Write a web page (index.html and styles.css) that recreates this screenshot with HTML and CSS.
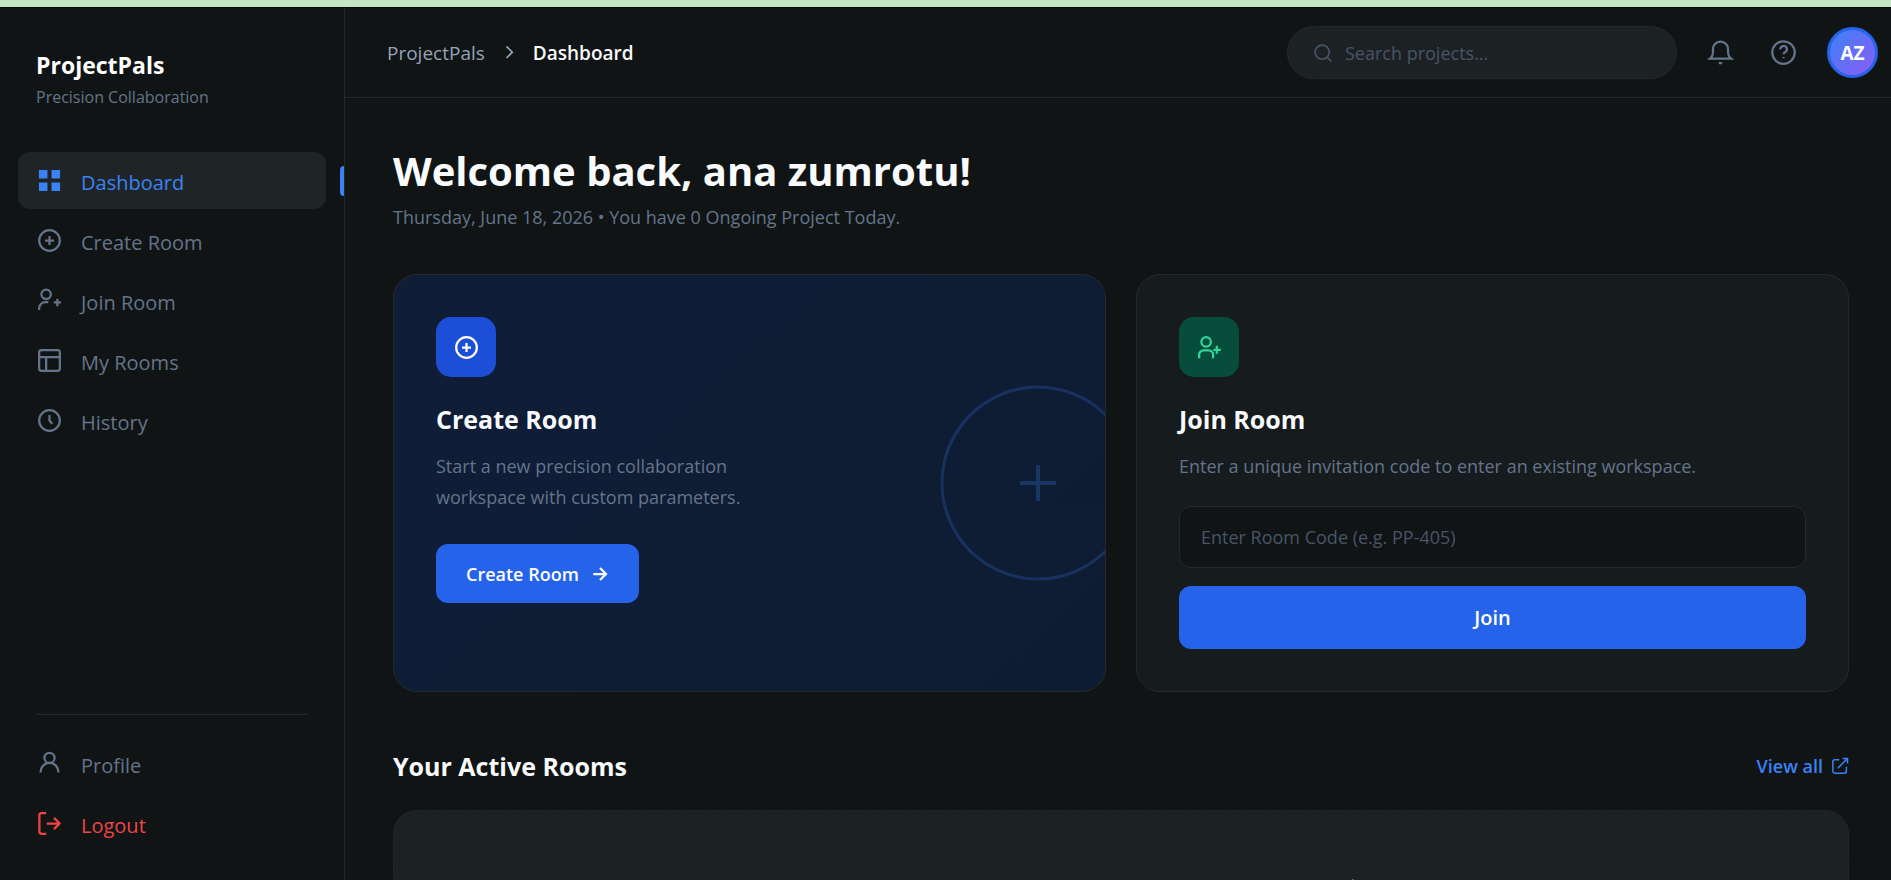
FILE: index.html
```html
<!DOCTYPE html>
<html lang="en">
<head>
  <meta charset="UTF-8">
  <meta name="viewport" content="width=device-width, initial-scale=1.0">
  <title>ProjectPals - Dashboard</title>
  <link rel="stylesheet" href="styles.css">
</head>
<body>

  <!-- Sidebar -->
  <aside class="sidebar">
    <div class="brand">
      <div class="brand-name">ProjectPals</div>
      <div class="brand-sub">Precision Collaboration</div>
    </div>

    <nav class="nav">
      <a href="#" class="nav-item active">
        <svg class="icon" viewBox="0 0 24 24"><rect x="2.6" y="2.6" width="7.6" height="7.6" rx="0.6"/><rect x="13.8" y="2.6" width="7.6" height="7.6" rx="0.6"/><rect x="2.6" y="13.8" width="7.6" height="7.6" rx="0.6"/><rect x="13.8" y="13.8" width="7.6" height="7.6" rx="0.6"/></svg>
        <span>Dashboard</span>
      </a>
      <a href="#" class="nav-item">
        <svg class="icon" viewBox="0 0 24 24"><circle cx="12" cy="12" r="9.2"/><path d="M12 8v8M8 12h8"/></svg>
        <span>Create Room</span>
      </a>
      <a href="#" class="nav-item">
        <svg class="icon" viewBox="0 0 24 24"><circle cx="9" cy="6.500" r="4.200"/><path d="M2.800 20.500v-1.500a5.500 5.500 0 0 1 5.500-5.500H11M19 10.500v6.500M15.800 13.700h6.500"/></svg>
        <span>Join Room</span>
      </a>
      <a href="#" class="nav-item">
        <svg class="icon" viewBox="0 0 24 24"><rect x="2.8" y="2.8" width="18.4" height="18.4" rx="2"/><path d="M3 9h18M9 9v12"/></svg>
        <span>My Rooms</span>
      </a>
      <a href="#" class="nav-item">
        <svg class="icon" viewBox="0 0 24 24"><circle cx="12" cy="12" r="9.2"/><path d="M12 7v5l2.500 3"/></svg>
        <span>History</span>
      </a>
    </nav>

    <div class="nav nav-bottom">
      <a href="#" class="nav-item">
        <svg class="icon" viewBox="0 0 24 24"><circle cx="12" cy="7" r="4.500"/><path d="M4 20c0-5 3.500-8.500 8-8.500s8 3.500 8 8.500"/></svg>
        <span>Profile</span>
      </a>
      <a href="#" class="nav-item logout">
        <svg class="icon" viewBox="0 0 24 24"><path d="M9 2.800H5a2 2 0 0 0-2 2v14.400a2 2 0 0 0 2 2h4M9.500 12H21M16 7l5 5-5 5"/></svg>
        <span>Logout</span>
      </a>
    </div>
  </aside>

  <div class="main">
    <!-- Topbar -->
    <header class="topbar">
      <div class="breadcrumb">
        <a href="#">ProjectPals</a>
        <svg class="icon chevron" viewBox="0 0 24 24"><path d="M9 4l7 7-7 7"/></svg>
        <span class="current">Dashboard</span>
      </div>
      <div class="topbar-right">
        <label class="search">
          <svg class="icon" viewBox="0 0 24 24"><circle cx="11" cy="11" r="8.500"/><path d="M17.500 17.500L22 22"/></svg>
          <input type="text" placeholder="Search projects..." aria-label="Search projects">
        </label>
        <button class="icon-btn" aria-label="Notifications">
          <svg class="icon" viewBox="0 0 24 24"><path d="M2.500 17.500h19c-2-1.500-2.800-3.500-2.800-6.500V9a6.700 6.700 0 0 0-13.400 0v2c0 3-.8 5-2.800 6.500zM10.500 21.500h3"/></svg>
        </button>
        <button class="icon-btn" aria-label="Help">
          <svg class="icon" viewBox="0 0 24 24"><circle cx="12" cy="12" r="10"/><path d="M9.200 9.200a2.900 2.900 0 1 1 4.200 2.500c-.9.500-1.400.9-1.400 1.800M12 16v1"/></svg>
        </button>
        <button class="avatar">AZ</button>
      </div>
    </header>

    <main class="content">
      <h1>Welcome back, ana zumrotu!</h1>
      <p class="subtitle">Thursday, June 18, 2026 • You have 0 Ongoing Project Today.</p>

      <div class="cards">
        <section class="card card-create">
          <svg class="card-art" viewBox="0 0 196 196"><circle cx="98" cy="98" r="96"/><path class="plus" d="M80 98h36M98 80v36"/></svg>
          <div class="card-icon blue">
            <svg class="icon" viewBox="0 0 24 24"><circle cx="12" cy="12" r="9.200"/><path d="M12 8v8M8 12h8"/></svg>
          </div>
          <h2>Create Room</h2>
          <p>Start a new precision collaboration workspace with custom parameters.</p>
          <button class="btn">Create Room
            <svg class="icon" viewBox="0 0 24 24"><path d="M3 12h17M12 4l8 8-8 8"/></svg>
          </button>
        </section>

        <section class="card">
          <div class="card-icon green">
            <svg class="icon" viewBox="0 0 24 24"><circle cx="9" cy="7" r="4.200"/><path d="M2.800 21.500v-3a4 4 0 0 1 4-4h4.400a4 4 0 0 1 4 4v3M18.500 10.500v7M15.500 14h6.500"/></svg>
          </div>
          <h2>Join Room</h2>
          <p>Enter a unique invitation code to enter an existing workspace.</p>
          <form class="join-form">
            <input type="text" placeholder="Enter Room Code (e.g. PP-405)" aria-label="Room code">
            <button type="button" class="btn">Join</button>
          </form>
        </section>
      </div>

      <div class="section-head">
        <h2>Your Active Rooms</h2>
        <a href="#" class="view-all">View all
          <svg class="icon" viewBox="0 0 24 24"><path d="M11 3.500H5a2.500 2.500 0 0 0-2.500 2.500v13A2.500 2.500 0 0 0 5 21.500h13a2.500 2.500 0 0 0 2.500-2.500v-6M9 15L22 2M15.500 2H22v6.500"/></svg>
        </a>
      </div>

      <div class="empty">
        <p>No active rooms yet. Create or join a room to get started.</p>
      </div>
    </main>
  </div>

</body>
</html>
```

FILE: styles.css
```css
* {
  box-sizing: border-box;
  margin: 0;
  padding: 0;
}

body {
  font-family: "Open Sans", "Noto Sans", sans-serif;
  background-color: #101414;
  color: #f8fafc;
  display: flex;
  height: 100vh;
  overflow: hidden;
  border-top: 7px solid #c5e3c6;
}

a {
  color: inherit;
  text-decoration: none;
}

button, input {
  font-family: inherit;
  border: none;
  outline: none;
}

button {
  cursor: pointer;
}

.icon {
  width: 27px;
  height: 27px;
  flex-shrink: 0;
  fill: none;
  stroke: currentColor;
  stroke-width: 2;
}

/* Sidebar */
.sidebar {
  width: 345px;
  flex-shrink: 0;
  display: flex;
  flex-direction: column;
  padding: 40px 18px 28px;
  border-right: 1px solid #25292b;
  border-top: 1px solid #050707;
}

.brand {
  padding: 0 18px;
  margin-bottom: 39px;
}

.brand-name {
  font-size: 23px;
  line-height: 34px;
  font-weight: 700;
  color: #fff;
}

.brand-sub {
  font-size: 16px;
  line-height: 31px;
  color: #64748b;
}

.nav {
  display: flex;
  flex-direction: column;
  gap: 3px;
}

.nav-item {
  position: relative;
  display: flex;
  align-items: center;
  gap: 18px;
  height: 57px;
  padding: 0 18px;
  border-radius: 12px;
  font-size: 20px;
  color: #64748b;
}

.nav-item span {
  padding-top: 3px;
}

.nav-item.active {
  background-color: #1f2526;
  color: #3b82f6;
  font-weight: 500;
}

.nav-item.active .icon {
  fill: currentColor;
  stroke: none;
}

/* marker on the sidebar edge */
.nav-item.active::after {
  content: "";
  position: absolute;
  right: -18px;
  width: 4px;
  height: 30px;
  border-radius: 4px 0 0 4px;
  background-color: #3b82f6;
}

.nav-bottom {
  margin-top: auto;
}

.nav-bottom::before {
  content: "";
  height: 1px;
  margin: 0 18px 17px;
  background-color: #25292b;
}

.nav-item.logout {
  color: #ef4444;
}

/* Topbar */
.main {
  flex: 1;
  min-width: 0;
  display: flex;
  flex-direction: column;
}

.topbar {
  height: 91px;
  flex-shrink: 0;
  display: flex;
  align-items: center;
  justify-content: space-between;
  padding: 0 13px 0 42px;
  border-top: 1px solid #050707;
  border-bottom: 1px solid #25292b;
}

.breadcrumb {
  display: flex;
  align-items: center;
  gap: 14px;
  font-size: 19px;
  color: #94a3b8;
}

.breadcrumb .chevron {
  width: 20px;
  height: 20px;
}

.breadcrumb .current {
  color: #f8fafc;
  font-weight: 600;
}

.topbar-right {
  display: flex;
  align-items: center;
}

.search {
  display: flex;
  align-items: center;
  gap: 12px;
  width: 390px;
  height: 53px;
  margin-right: 12px;
  padding: 0 25px;
  border: 1px solid #25292b;
  border-radius: 27px;
  background-color: #1c2123;
  color: #475569;
}

.search .icon {
  width: 20px;
  height: 20px;
}

.search input {
  flex: 1;
  min-width: 0;
  background: none;
  color: #f8fafc;
  font-size: 18px;
}

input::placeholder {
  color: #475569;
}

.icon-btn {
  display: flex;
  align-items: center;
  justify-content: center;
  width: 63px;
  height: 48px;
  background: none;
  color: #64748b;
}

.avatar {
  width: 51px;
  height: 51px;
  margin-left: 12px;
  border: 3px solid #2563eb;
  border-radius: 50%;
  background: linear-gradient(135deg, #3b82f6, #8b5cf6);
  color: #fff;
  font-size: 19px;
  font-weight: 700;
}

/* Content */
.content {
  padding: 46px 42px 48px 48px;
}

h1 {
  font-size: 40px;
  line-height: 54px;
  font-weight: 700;
}

.subtitle {
  font-size: 18px;
  line-height: 30px;
  margin: 4px 0 42px;
  color: #64748b;
}

.cards {
  display: grid;
  grid-template-columns: 1fr 1fr;
  gap: 30px;
}

.card {
  position: relative;
  overflow: hidden;
  padding: 42px;
  border: 1px solid #25292b;
  border-radius: 24px;
  background-color: #161b1d;
}

.card-create {
  background: linear-gradient(135deg, #101d37, #0e1c33);
}

.card-art {
  position: absolute;
  right: -31px;
  top: 110px;
  width: 196px;
  height: 196px;
  fill: none;
  stroke: #3b6fe0;
  stroke-width: 3;
  opacity: 0.25;
}

.card-art .plus {
  stroke: #3b82f6;
  stroke-width: 4;
}

.card-icon {
  display: flex;
  align-items: center;
  justify-content: center;
  width: 60px;
  height: 60px;
  margin-bottom: 24px;
  border-radius: 15px;
}

.card-icon.blue {
  background-color: #1d4ed8;
  color: #fff;
}

.card-icon.green {
  background-color: #064e3b;
  color: #34d399;
}

h2 {
  font-size: 25px;
  line-height: 36px;
  font-weight: 700;
}

.card p {
  margin: 14px 0 24px;
  font-size: 18px;
  line-height: 31px;
  color: #64748b;
}

.card-create p {
  max-width: 350px;
  margin-bottom: 31px;
}

.btn {
  display: inline-flex;
  align-items: center;
  justify-content: center;
  gap: 12px;
  height: 59px;
  padding: 0 30px;
  border-radius: 12px;
  background-color: #2563eb;
  color: #fff;
  font-size: 18px;
  font-weight: 600;
}

.btn .icon {
  width: 18px;
  height: 18px;
  stroke-width: 3;
}

.join-form {
  display: flex;
  flex-direction: column;
  gap: 18px;
}

.join-form input {
  height: 62px;
  padding: 0 21px;
  border: 1px solid #25292b;
  border-radius: 12px;
  background-color: #101414;
  color: #f8fafc;
  font-size: 18px;
}

.join-form .btn {
  height: 63px;
  font-size: 20px;
}

.section-head {
  display: flex;
  align-items: center;
  justify-content: space-between;
  margin: 56px 0 26px;
}

.view-all {
  display: flex;
  align-items: center;
  gap: 8px;
  font-size: 18px;
  font-weight: 600;
  color: #3b82f6;
}

.view-all .icon {
  width: 18px;
  height: 18px;
}

.empty {
  padding: 60px;
  border: 1px dashed #25292b;
  border-radius: 24px;
  background-color: #1c2123;
  color: #64748b;
  font-size: 18px;
  line-height: 31px;
  text-align: center;
}
```
